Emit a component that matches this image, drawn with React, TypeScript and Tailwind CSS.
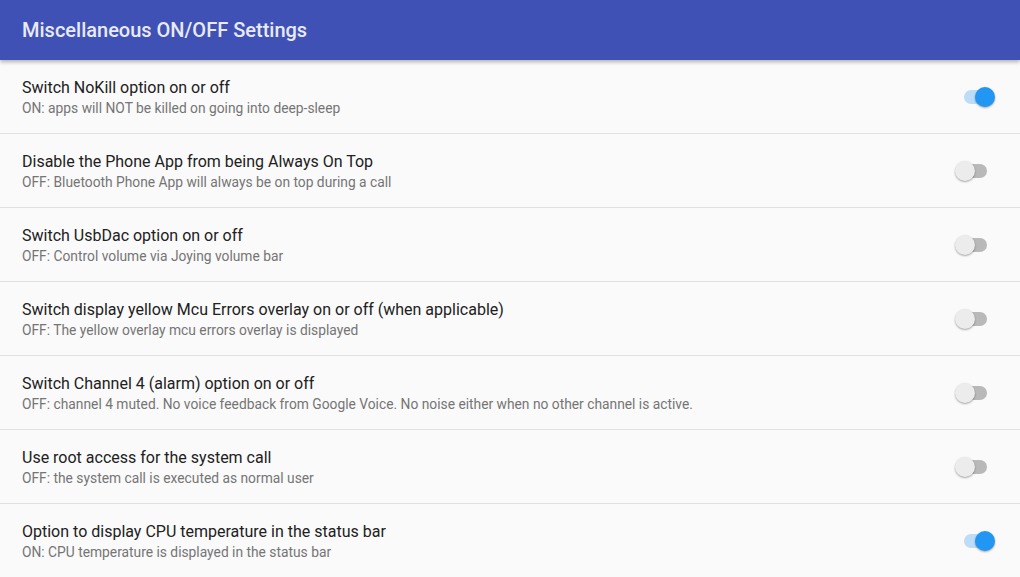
import React from 'react';

type Setting = { title: string; summary: string; on: boolean };

const settings: Setting[] = [
  { title: 'Switch NoKill option on or off', summary: 'ON: apps will NOT be killed on going into deep-sleep', on: true },
  { title: 'Disable the Phone App from being Always On Top', summary: 'OFF: Bluetooth Phone App will always be on top during a call', on: false },
  { title: 'Switch UsbDac option on or off', summary: 'OFF: Control volume via Joying volume bar', on: false },
  { title: 'Switch display yellow Mcu Errors overlay on or off (when applicable)', summary: 'OFF: The yellow overlay mcu errors overlay is displayed', on: false },
  { title: 'Switch Channel 4 (alarm) option on or off', summary: 'OFF: channel 4 muted. No voice feedback from Google Voice. No noise either when no other channel is active.', on: false },
  { title: 'Use root access for the system call', summary: 'OFF: the system call is executed as normal user', on: false },
  { title: 'Option to display CPU temperature in the status bar', summary: 'ON: CPU temperature is displayed in the status bar', on: true },
];

function Toggle({ on }: { on: boolean }) {
  return (
    <div className="relative w-[40px] h-[20px]">
      <div className={`absolute left-[9px] top-[3px] w-[23px] h-[14px] rounded-full ${on ? 'bg-[#bcdcf8]' : 'bg-[#b9b9b9]'}`} />
      <div
        className={`absolute top-0 w-[20px] h-[20px] rounded-full shadow-[0_1px_2px_rgba(0,0,0,0.35)] ${on ? 'left-[20px] bg-[#2196f3]' : 'left-0 bg-[#ececec]'}`}
      />
    </div>
  );
}

export default function App() {
  return (
    <div className="w-[1020px] h-[577px] overflow-hidden bg-[#fafafa] font-['Roboto','Liberation_Sans',sans-serif]">
      <header className="relative z-10 h-[60px] bg-[#3f51b5] flex items-center px-[22px] shadow-[0_2px_4px_rgba(0,0,0,0.3)]">
        <h1 className="text-[20px] font-medium text-[#e8eaf6]">Miscellaneous ON/OFF Settings</h1>
      </header>
      <div>
        {settings.map((s, i) => (
          <div
            key={i}
            className={`h-[74px] flex items-center justify-between pl-[22px] pr-[25px] ${i < settings.length - 1 ? 'border-b border-[#e0e0e0]' : ''}`}
          >
            <div className="flex flex-col pt-[1px]">
              <span className="text-[16px] leading-[20px] text-[#212121]">{s.title}</span>
              <span className="text-[13.8px] leading-[18px] mt-[1px] text-[#757575]">{s.summary}</span>
            </div>
            <Toggle on={s.on} />
          </div>
        ))}
      </div>
    </div>
  );
}
